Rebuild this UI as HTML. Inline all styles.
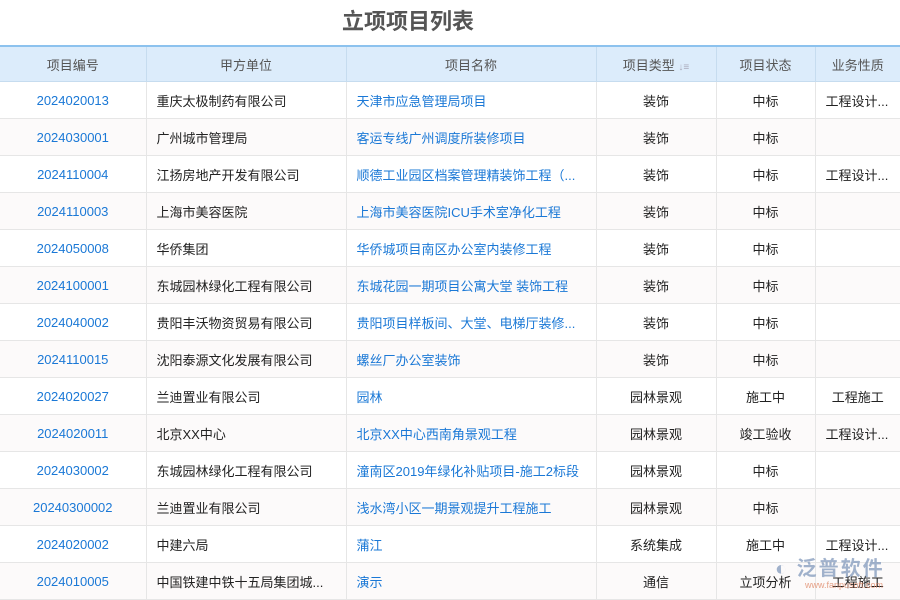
<!DOCTYPE html>
<html><head><meta charset="utf-8"><style>
body{margin:0;width:900px;height:600px;overflow:hidden;background:#fff;font-family:"Liberation Sans","Noto Sans CJK SC",sans-serif;position:relative}
.t{position:absolute;left:0;width:816px;top:6px;text-align:center;font-size:22px;font-weight:bold;color:#555;line-height:32px}
table{position:absolute;top:45px;left:0;border-collapse:collapse;table-layout:fixed;width:900px;font-size:13px}
th{background:#dcecfb;color:#555;font-weight:normal;height:34px;padding:0;border-top:2px solid #8cc2ee;border-left:1px solid #c6dcef;border-bottom:1px solid #c6dcef;white-space:nowrap}
td{height:36px;border-left:1px solid #e6e6e6;border-bottom:1px solid #e6e6e6;white-space:nowrap;overflow:hidden;text-overflow:ellipsis;color:#222;padding:0 10px}
tr:nth-child(odd) td{background:#fcfafa}
th:first-child,td:first-child{border-left:none}
.c{text-align:center}.b{color:#1a78d6}
.wm{position:absolute;left:775px;top:552px;font-size:20px;color:#8aa0c0;opacity:.8;font-weight:bold;letter-spacing:2px}
.wm2{position:absolute;left:805px;top:580px;font-size:9px;color:#e08a6a;opacity:.8}
</style></head><body>
<div class="t">立项项目列表</div>
<table>
<colgroup><col style="width:146px"><col style="width:200px"><col style="width:250px"><col style="width:120px"><col style="width:99px"><col style="width:85px"></colgroup>
<tr><th>项目编号</th><th>甲方单位</th><th>项目名称</th><th>项目类型 <span style="color:#aab;font-size:10px">↓≡</span></th><th>项目状态</th><th>业务性质</th></tr>
<tr><td class="c b">2024020013</td><td>重庆太极制药有限公司</td><td class="b">天津市应急管理局项目</td><td class="c">装饰</td><td class="c">中标</td><td>工程设计...</td></tr>
<tr><td class="c b">2024030001</td><td>广州城市管理局</td><td class="b">客运专线广州调度所装修项目</td><td class="c">装饰</td><td class="c">中标</td><td></td></tr>
<tr><td class="c b">2024110004</td><td>江扬房地产开发有限公司</td><td class="b">顺德工业园区档案管理精装饰工程（...</td><td class="c">装饰</td><td class="c">中标</td><td>工程设计...</td></tr>
<tr><td class="c b">2024110003</td><td>上海市美容医院</td><td class="b">上海市美容医院ICU手术室净化工程</td><td class="c">装饰</td><td class="c">中标</td><td></td></tr>
<tr><td class="c b">2024050008</td><td>华侨集团</td><td class="b">华侨城项目南区办公室内装修工程</td><td class="c">装饰</td><td class="c">中标</td><td></td></tr>
<tr><td class="c b">2024100001</td><td>东城园林绿化工程有限公司</td><td class="b">东城花园一期项目公寓大堂 装饰工程</td><td class="c">装饰</td><td class="c">中标</td><td></td></tr>
<tr><td class="c b">2024040002</td><td>贵阳丰沃物资贸易有限公司</td><td class="b">贵阳项目样板间、大堂、电梯厅装修...</td><td class="c">装饰</td><td class="c">中标</td><td></td></tr>
<tr><td class="c b">2024110015</td><td>沈阳泰源文化发展有限公司</td><td class="b">螺丝厂办公室装饰</td><td class="c">装饰</td><td class="c">中标</td><td></td></tr>
<tr><td class="c b">2024020027</td><td>兰迪置业有限公司</td><td class="b">园林</td><td class="c">园林景观</td><td class="c">施工中</td><td class="c">工程施工</td></tr>
<tr><td class="c b">2024020011</td><td>北京XX中心</td><td class="b">北京XX中心西南角景观工程</td><td class="c">园林景观</td><td class="c">竣工验收</td><td>工程设计...</td></tr>
<tr><td class="c b">2024030002</td><td>东城园林绿化工程有限公司</td><td class="b">潼南区2019年绿化补贴项目-施工2标段</td><td class="c">园林景观</td><td class="c">中标</td><td></td></tr>
<tr><td class="c b">20240300002</td><td>兰迪置业有限公司</td><td class="b">浅水湾小区一期景观提升工程施工</td><td class="c">园林景观</td><td class="c">中标</td><td></td></tr>
<tr><td class="c b">2024020002</td><td>中建六局</td><td class="b">蒲江</td><td class="c">系统集成</td><td class="c">施工中</td><td>工程设计...</td></tr>
<tr><td class="c b">2024010005</td><td>中国铁建中铁十五局集团城...</td><td class="b">演示</td><td class="c">通信</td><td class="c">立项分析</td><td class="c">工程施工</td></tr>
</table>
<div class="wm">◐ 泛普软件</div>
<div class="wm2">www.fanpusoft.com</div>
</body></html>
